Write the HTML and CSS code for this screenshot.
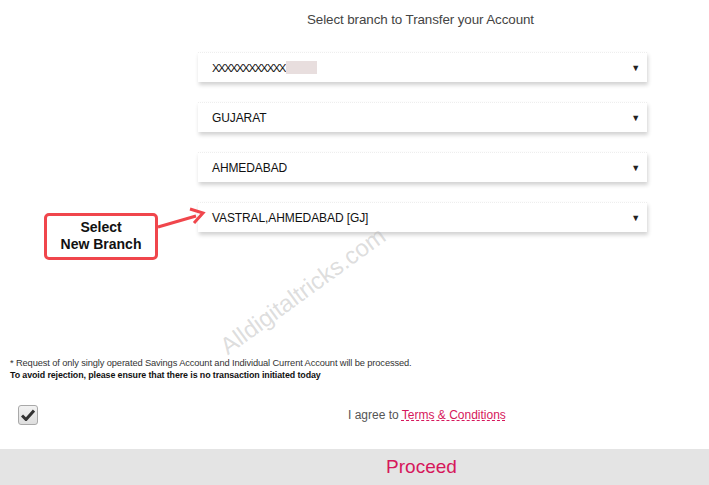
FILE: index.html
```html
<!DOCTYPE html>
<html>
<head>
<meta charset="utf-8">
<link rel="stylesheet" href="styles.css">
</head>
<body>
<div class="page">
  <div class="form">
    <h1 class="title">Select branch to Transfer your Account</h1>
    <div class="select"><span class="val"><span class="xs">XXXXXXXXXXXX</span><span class="mask"></span></span><span class="arrow">▼</span></div>
    <div class="select"><span class="val">GUJARAT</span><span class="arrow">▼</span></div>
    <div class="select"><span class="val">AHMEDABAD</span><span class="arrow">▼</span></div>
    <div class="select"><span class="val">VASTRAL,AHMEDABAD [GJ]</span><span class="arrow">▼</span></div>
  </div>
  <div class="notes">
    <p class="note">* Request of only singly operated Savings Account and Individual Current Account will be processed.</p>
    <p class="note bold">To avoid rejection, please ensure that there is no transaction initiated today</p>
  </div>
  <div class="agree-row">
    <span class="checkbox"><svg width="14" height="12" viewBox="0 0 14 12"><path d="M1 6.5 L5 10.5 L13 1.5" fill="none" stroke="#333" stroke-width="3" stroke-linejoin="miter"/></svg></span>
    <span class="agree">I agree to <a class="terms">Terms &amp; Conditions</a></span>
  </div>
  <div class="footer"><span class="proceed">Proceed</span></div>

  <div class="callout">Select<br>New Branch</div>
  <svg class="callout-arrow" width="50" height="26" viewBox="0 0 50 26"><path d="M2 21 L40 10" stroke="#f0464c" stroke-width="3" fill="none"/><path d="M34 3 L47 7 L38 17" stroke="#f0464c" stroke-width="3" fill="none" stroke-linejoin="miter"/></svg>
  <div class="watermark">Alldigitaltricks.com</div>
</div>
</body>
</html>
```
FILE: styles.css
```css
* { box-sizing: border-box; }
html, body { margin: 0; padding: 0; background: #fff; }
body { width: 709px; height: 485px; overflow: hidden; font-family: "Liberation Sans", Arial, sans-serif; color: #333; }
.page { position: relative; width: 709px; height: 485px; display: flex; flex-direction: column; }
.form { margin-left: 198px; width: 449px; display: flex; flex-direction: column; }
.title { margin: 0; padding-top: 12px; padding-right: 4px; height: 52px; text-align: center; font-weight: normal; font-size: 13.4px; color: #444; letter-spacing: -0.1px; }
.select { height: 30px; margin-bottom: 20px; display: flex; align-items: center; justify-content: space-between; padding: 0 7px 0 14px; background: #fff; box-shadow: 1px 3px 4px rgba(0,0,0,0.18); border-top: 1px dotted #eee; font-size: 12px; color: #111; letter-spacing: -0.1px; }
.val { display: flex; align-items: center; }
.xs { letter-spacing: -1.6px; font-size: 11.5px; }
.mask { display: inline-block; width: 31px; height: 13px; background: #e8dede; margin-left: 1px; }
.arrow { font-size: 9px; color: #222; }
.notes { margin-top: 105px; padding-left: 10px; }
.note { margin: 0; font-size: 9.3px; line-height: 12px; color: #333; letter-spacing: -0.12px; }
.note.bold { font-weight: bold; color: #111; font-size: 8.9px; letter-spacing: -0.1px; }
.agree-row { margin-top: 22px; height: 25px; display: flex; align-items: center; position: relative; }
.checkbox { margin-left: 18px; width: 20px; height: 20px; border: 1px solid #a9a9a9; border-radius: 3px; background: linear-gradient(#f2f2f2, #dedede); display: flex; align-items: center; justify-content: center; }
.agree { margin-left: 310px; font-size: 12px; color: #555; }
.terms { color: #d6175b; text-decoration: underline; text-decoration-style: dashed; }
.footer { margin-top: 21px; height: 37px; background: #e4e4e4; display: flex; justify-content: center; padding-left: 134px; padding-top: 7px; }
.proceed { font-size: 19px; color: #d6175b; }
.callout { position: absolute; left: 44px; top: 213px; width: 114px; height: 47px; border: 3px solid #f0464c; border-radius: 5px; background: #fff; font-weight: bold; font-size: 14px; line-height: 17px; text-align: center; color: #111; padding-top: 3px; }
.callout-arrow { position: absolute; left: 156px; top: 206px; }
.watermark { position: absolute; left: 200px; top: 277px; width: 206px; font-size: 24px; text-align: center; color: rgba(180,180,180,0.45); transform: rotate(-36deg); transform-origin: center; white-space: nowrap; }
```
